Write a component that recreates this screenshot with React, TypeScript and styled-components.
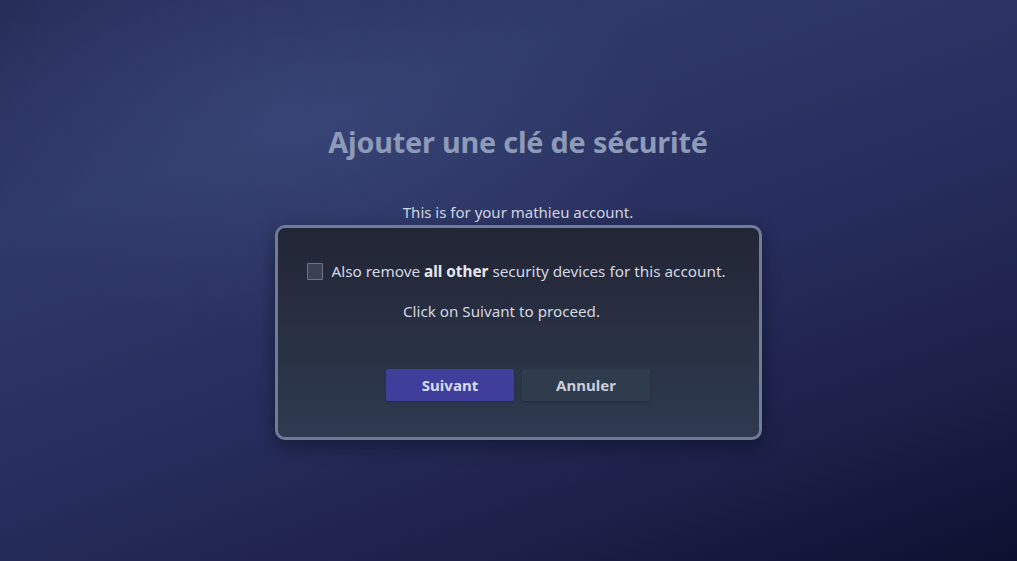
import { createGlobalStyle } from 'styled-components';
import styled from 'styled-components';

const GlobalStyle = createGlobalStyle`
  html, body {
    margin: 0;
    padding: 0;
    height: 100%;
  }
  body {
    font-family: "Noto Sans", "Open Sans", sans-serif;
    overflow: hidden;
  }
  #root {
    height: 100%;
  }
`;

const Page = styled.div`
  height: 100vh;
  width: 100vw;
  display: flex;
  flex-direction: column;
  align-items: center;
  justify-content: flex-start;
  padding: 121px 0 0 19px;
  box-sizing: border-box;
  background:
    radial-gradient(ellipse 520px 300px at 300px 120px, rgba(62, 76, 128, 0.55), rgba(62, 76, 128, 0) 70%),
    linear-gradient(160deg, #262c58 0%, #2f3a68 25%, #272d5c 55%, #1c1f47 80%, #0d1030 100%);
`;

const Title = styled.h1`
  margin: 0;
  font-size: 28.8px;
  font-weight: 700;
  color: #8d9ab8;
  line-height: 42px;
  letter-spacing: -0.2px;
`;

const Subtitle = styled.p`
  margin: 39px 0 0;
  font-size: 15px;
  line-height: 20px;
  color: #d3d7e3;
`;

const Card = styled.div`
  margin-top: 3px;
  width: 487px;
  height: 215px;
  box-sizing: border-box;
  border: 3px solid #6e7c9a;
  border-radius: 10px;
  background: linear-gradient(180deg, #222535 0%, #283042 50%, #2f3a50 100%);
  box-shadow: 0 6px 18px rgba(5, 8, 25, 0.45);
  display: flex;
  flex-direction: column;
  align-items: center;
  padding-top: 33px;
`;

const CheckRow = styled.label`
  display: flex;
  align-items: center;
  gap: 8px;
  font-size: 15.3px;
  color: #d3d7e3;
  line-height: 20px;
  margin-left: -3px;
`;

const Box = styled.span`
  width: 14px;
  height: 15px;
  border: 1px solid #6d7488;
  background: #3a4152;
  border-radius: 1px;
  flex-shrink: 0;
`;

const Strong = styled.b`
  font-weight: 700;
  color: #e6e9f1;
`;

const Hint = styled.p`
  margin: 20px 0 0 -33px;
  font-size: 15.2px;
  line-height: 20px;
  color: #d3d7e3;
`;

const Actions = styled.div`
  display: flex;
  gap: 8px;
  margin-top: 48px;
`;

const Button = styled.button<{ $primary?: boolean }>`
  width: 128px;
  height: 32px;
  border: none;
  border-radius: 2px;
  font-family: inherit;
  font-size: 15px;
  font-weight: 700;
  color: ${(p) => (p.$primary ? '#d8dbf2' : '#c9d0dc')};
  background: ${(p) => (p.$primary ? '#3f3e9b' : '#2f3c4e')};
  box-shadow: 0 1px 2px rgba(0, 0, 0, 0.25);
`;

export default function App() {
  return (
    <>
      <GlobalStyle />
      <Page>
        <Title>Ajouter une clé de sécurité</Title>
        <Subtitle>This is for your mathieu account.</Subtitle>
        <Card>
          <CheckRow>
            <Box />
            <span>
              Also remove <Strong>all other</Strong> security devices for this account.
            </span>
          </CheckRow>
          <Hint>Click on Suivant to proceed.</Hint>
          <Actions>
            <Button $primary>Suivant</Button>
            <Button>Annuler</Button>
          </Actions>
        </Card>
      </Page>
    </>
  );
}
